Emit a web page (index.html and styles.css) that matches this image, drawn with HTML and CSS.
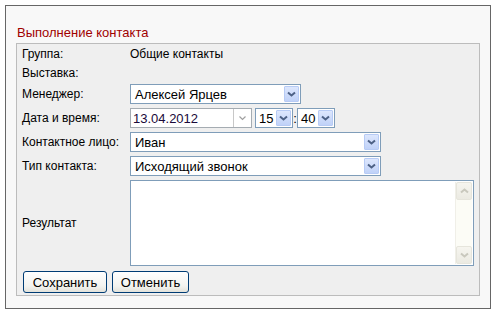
FILE: index.html
```html
<!DOCTYPE html>
<html lang="ru">
<head>
    <meta charset="UTF-8">
    <title>Выполнение контакта</title>
    <link rel="stylesheet" href="styles.css">
</head>
<body>
    <div class="panel">
        <div class="title">Выполнение контакта</div>
        <div class="box">
            <div class="form">
                <div class="lbl">Группа:</div>
                <div class="val">Общие контакты</div>

                <div class="lbl">Выставка:</div>
                <div class="val"></div>

                <div class="lbl">Менеджер:</div>
                <div class="val">
                    <span class="select w-manager"><span class="text">Алексей Ярцев</span><span class="arrow"><svg width="9" height="6" viewBox="0 0 9 6"><path d="M1 1.5 L4.5 4.5 L8 1.5" fill="none" stroke="#4d6185" stroke-width="2"/></svg></span></span>
                </div>

                <div class="lbl">Дата и время:</div>
                <div class="val datetime">
                    <span class="date"><span class="text">13.04.2012</span><span class="date-arrow"><svg width="9" height="6" viewBox="0 0 9 6"><path d="M1.5 1.5 L4.5 4.5 L7.5 1.5" fill="none" stroke="#a0a0a0" stroke-width="1.2"/></svg></span></span>
                    <span class="select w-time"><span class="text">15</span><span class="arrow"><svg width="9" height="6" viewBox="0 0 9 6"><path d="M1 1.5 L4.5 4.5 L8 1.5" fill="none" stroke="#4d6185" stroke-width="2"/></svg></span></span>
                    <span class="colon">:</span>
                    <span class="select w-time"><span class="text">40</span><span class="arrow"><svg width="9" height="6" viewBox="0 0 9 6"><path d="M1 1.5 L4.5 4.5 L8 1.5" fill="none" stroke="#4d6185" stroke-width="2"/></svg></span></span>
                </div>

                <div class="lbl">Контактное лицо:</div>
                <div class="val">
                    <span class="select w-wide"><span class="text">Иван</span><span class="arrow"><svg width="9" height="6" viewBox="0 0 9 6"><path d="M1 1.5 L4.5 4.5 L8 1.5" fill="none" stroke="#4d6185" stroke-width="2"/></svg></span></span>
                </div>

                <div class="lbl">Тип контакта:</div>
                <div class="val">
                    <span class="select w-wide"><span class="text">Исходящий звонок</span><span class="arrow"><svg width="9" height="6" viewBox="0 0 9 6"><path d="M1 1.5 L4.5 4.5 L8 1.5" fill="none" stroke="#4d6185" stroke-width="2"/></svg></span></span>
                </div>

                <div class="lbl">Результат</div>
                <div class="val">
                    <div class="textarea">
                        <div class="scroll">
                            <span class="sbtn"><svg width="9" height="6" viewBox="0 0 9 6"><path d="M1 4.5 L4.5 1.5 L8 4.5" fill="none" stroke="#c9c8bd" stroke-width="2"/></svg></span>
                            <span class="sbtn"><svg width="9" height="6" viewBox="0 0 9 6"><path d="M1 1.5 L4.5 4.5 L8 1.5" fill="none" stroke="#c9c8bd" stroke-width="2"/></svg></span>
                        </div>
                    </div>
                </div>
            </div>
            <div class="actions">
                <button>Сохранить</button>
                <button class="cancel">Отменить</button>
            </div>
        </div>
    </div>
</body>
</html>
```

FILE: styles.css
```css
body {
    margin: 5px;
    font-family: "Liberation Sans", Arial, sans-serif;
    font-size: 12px;
    color: #000;
    background: #fff;
}
.panel {
    width: 464px;
    height: 283px;
    border: 1px solid #666;
    background: #f8f8f8;
    padding: 19px 10px 0 10px;
}
.title {
    color: #a00000;
    font-size: 13px;
    line-height: 15px;
    margin-bottom: 3px;
    margin-left: 1px;
}
.box {
    border: 1px solid #bcbcbc;
    background: #efefef;
    padding: 2px 4px 3px 5px;
    height: 246px;
}
.form {
    display: grid;
    grid-template-columns: 108px 1fr;
    grid-template-rows: 15px 15px 20px 20px 20px 20px 86px;
    row-gap: 4px;
}
.lbl, .val {
    display: flex;
    align-items: center;
}
.select {
    display: flex;
    align-items: center;
    height: 20px;
    box-sizing: border-box;
    border: 1px solid #7f9db9;
    background: #fff;
    font-size: 13px;
    padding: 1px;
}
.select .text {
    flex: 1;
    padding-left: 3px;
    white-space: nowrap;
}
.arrow {
    width: 15px;
    height: 16px;
    box-sizing: border-box;
    border: 1px solid #b7cbf5;
    border-radius: 1px;
    background: linear-gradient(#dde7fd, #c0d2f8);
    display: flex;
    align-items: center;
    justify-content: center;
}
.w-manager { width: 171px; }
.w-wide { width: 251px; }
.w-time { width: 38px; }
.w-time .text { padding-left: 2px; }
.date {
    display: flex;
    align-items: center;
    width: 122px;
    height: 20px;
    box-sizing: border-box;
    border: 1px solid #a5acb2;
    background: #fff;
    font-size: 13px;
    color: #1a0a3a;
    margin-right: 3px;
}
.date .text {
    flex: 1;
    padding-left: 2px;
}
.date-arrow {
    width: 17px;
    height: 18px;
    border-left: 1px solid #c8c8c8;
    display: flex;
    align-items: center;
    justify-content: center;
}
.colon {
    width: 4px;
    text-align: center;
    font-size: 13px;
}
.textarea {
    width: 344px;
    height: 86px;
    box-sizing: border-box;
    border: 1px solid #7f9db9;
    background: #fff;
    display: flex;
    justify-content: flex-end;
    padding: 1px;
}
.scroll {
    width: 16px;
    background: #fcfcf6;
    border-left: 1px solid #f0efe8;
    display: flex;
    flex-direction: column;
    justify-content: space-between;
}
.sbtn {
    height: 16px;
    border: 1px solid #e6e5dc;
    border-radius: 2px;
    background: linear-gradient(#f6f5ef, #ebeae2);
    display: flex;
    align-items: center;
    justify-content: center;
}
.actions {
    display: flex;
    gap: 5px;
    margin-top: 5px;
    margin-left: 1px;
}
button {
    height: 22px;
    width: 84px;
    font-family: "Liberation Sans", Arial, sans-serif;
    font-size: 13px;
    color: #000;
    border: 1px solid #003c74;
    border-radius: 3px;
    background: linear-gradient(#ffffff, #f3f3ef 70%, #e3e2da);
    padding: 0;
}
button.cancel {
    width: 77px;
}
```
